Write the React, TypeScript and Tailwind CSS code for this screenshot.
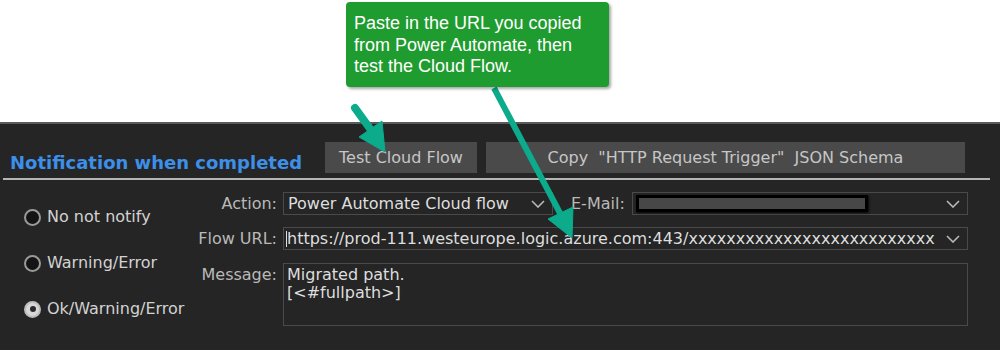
import React from 'react';

const Chevron = () => (
  <svg width="14" height="8" viewBox="0 0 14 8" className="shrink-0">
    <path d="M1 1l6 6 6-6" fill="none" stroke="#b8b8b8" strokeWidth="1.6" />
  </svg>
);

function Radio({ label, checked }: { label: string; checked?: boolean }) {
  return (
    <div className="flex h-[16px] items-center gap-[6px]">
      <span
        className={
          checked
            ? 'flex h-[17px] w-[17px] shrink-0 items-center justify-center rounded-full border-2 border-[#bdbdbd] bg-[#d8d8d8]'
            : 'flex h-[17px] w-[17px] shrink-0 items-center justify-center rounded-full border-2 border-[#9a9a9a] bg-[#141414]'
        }
      >
        {checked && <span className="h-[6px] w-[6px] rounded-full bg-[#2a2a2a]" />}
      </span>
      <span className="whitespace-nowrap text-[16px] text-[#d2d2d2]">{label}</span>
    </div>
  );
}

export default function App() {
  const url = 'https://prod-111.westeurope.logic.azure.com:443/' + 'x'.repeat(26);

  return (
    <div className="relative h-[350px] w-[1000px] overflow-hidden bg-white font-['DejaVu_Sans',sans-serif]">
      {/* callout */}
      <div className="h-[122px] pl-[346px] pt-[2px]">
        <div className="relative z-30 h-[85px] w-[263px] rounded-[4px] bg-[#1f9c2f] pl-[8px] pt-[11px] font-['Liberation_Sans',Arial,sans-serif] text-[18px] leading-[21.5px] text-white shadow-[2px_2px_3px_rgba(0,0,0,0.35)]">
          Paste in the URL you copied
          <br />
          from Power Automate, then
          <br />
          test the Cloud Flow.
        </div>
      </div>

      {/* dark panel */}
      <div className="h-[228px] border-t-2 border-[#5a5a5a] bg-[#252525]">
        <div className="mt-[18px] flex h-[31px] items-center pl-[10px]">
          <h2 className="mt-[10px] w-[315px] whitespace-nowrap text-[18px] font-bold leading-[22px] text-[#3d8fe8]">
            Notification when completed
          </h2>
          <button className="h-[31px] w-[152px] bg-[#4a4a4a] text-[16px] text-[#c6c6c6]">
            Test Cloud Flow
          </button>
          <button className="ml-[9px] h-[31px] w-[479px] whitespace-pre bg-[#4a4a4a] text-[16px] text-[#c6c6c6]">
            Copy  "HTTP Request Trigger"  JSON Schema
          </button>
        </div>
        <div className="ml-[3px] mt-[5px] h-[2px] w-[987px] bg-[#b4b4b4]" />

        <div className="flex">
          <div className="flex w-[190px] flex-col gap-[30px] pl-[24px] pt-[29px]">
            <Radio label="No not notify" />
            <Radio label="Warning/Error" />
            <Radio label="Ok/Warning/Error" checked />
          </div>

          <div className="grid grid-cols-[87px_685px] gap-x-[6px] gap-y-[12px] pt-[12px] text-[16px] leading-[23px]">
            <div className="self-center whitespace-nowrap text-right text-[#b9b9b9]">Action:</div>
            <div className="flex h-[23px] items-center">
              <div className="flex h-[23px] w-[270px] items-center justify-between border border-[#4a4a4a] pl-[4px] pr-[7px] text-[#dedede]">
                <span className="whitespace-nowrap">Power Automate Cloud flow</span>
                <Chevron />
              </div>
              <span className="ml-[18px] text-[#b9b9b9]">E-Mail:</span>
              <div className="ml-[7px] flex h-[23px] flex-1 items-center justify-between border border-[#4a4a4a] pl-[3px] pr-[7px]">
                <div className="h-[17px] w-[232px] border-[3px] border-black bg-[#474747] shadow-[1px_1px_2px_rgba(0,0,0,0.8)]" />
                <Chevron />
              </div>
            </div>

            <div className="self-center whitespace-nowrap text-right text-[#b9b9b9]">Flow URL:</div>
            <div className="flex h-[23px] items-center border border-[#4a4a4a] pl-[2px] pr-[7px] text-[#dedede]">
              <span className="h-[16px] w-px shrink-0 bg-[#e0e0e0]" />
              <span className="mr-[8px] flex-1 overflow-hidden whitespace-nowrap">{url}</span>
              <Chevron />
            </div>

            <div className="mt-[1px] whitespace-nowrap text-right text-[#b9b9b9]">Message:</div>
            <div className="mt-[1px] h-[63px] border border-[#4a4a4a] px-[3px] pt-[2px] leading-[18px] text-[#dedede]">
              Migrated path.
              <br />
              [&lt;#fullpath&gt;]
            </div>
          </div>
        </div>
      </div>

      {/* arrows */}
      <svg className="pointer-events-none absolute left-0 top-0 z-20" width="1000" height="350" viewBox="0 0 1000 350">
        <g fill="#0bab8b" stroke="#0bab8b">
          <line x1="355" y1="108" x2="371" y2="130" strokeWidth="8" strokeLinecap="round" />
          <polygon points="385,152 359,137 382,121" strokeWidth="1" strokeLinejoin="round" />
          <line x1="494" y1="88" x2="561" y2="215" strokeWidth="6" />
          <polygon points="572,238 548,219 573,207" strokeWidth="1" strokeLinejoin="round" />
        </g>
      </svg>
    </div>
  );
}
